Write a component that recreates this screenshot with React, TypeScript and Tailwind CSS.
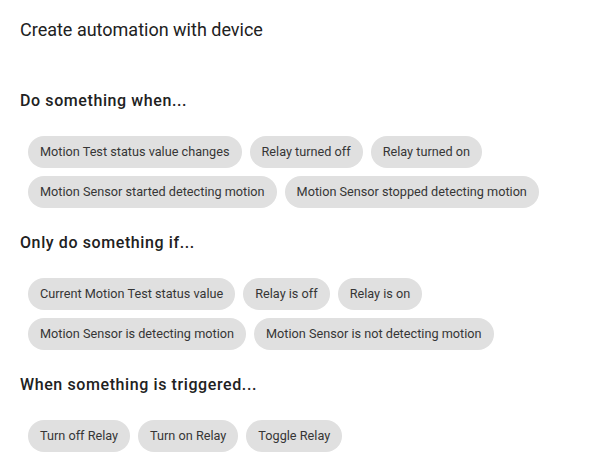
import React from 'react';

const sections = [
  {
    title: 'Do something when...',
    items: [
      'Motion Test status value changes',
      'Relay turned off',
      'Relay turned on',
      'Motion Sensor started detecting motion',
      'Motion Sensor stopped detecting motion',
    ],
  },
  {
    title: 'Only do something if...',
    items: [
      'Current Motion Test status value',
      'Relay is off',
      'Relay is on',
      'Motion Sensor is detecting motion',
      'Motion Sensor is not detecting motion',
    ],
  },
  {
    title: 'When something is triggered...',
    items: ['Turn off Relay', 'Turn on Relay', 'Toggle Relay'],
  },
];

function Chip({ label }: { label: string }) {
  return (
    <button className="h-8 px-3 rounded-full bg-[#e0e0e0] text-[12.7px] text-[#363636] leading-8 whitespace-nowrap">
      {label}
    </button>
  );
}

export default function App() {
  return (
    <div className="w-[591px] h-[469px] bg-white px-5 font-['Roboto',sans-serif] overflow-hidden">
      <h2 className="pt-[18px] text-[18px] leading-6 text-[#212121]">Create automation with device</h2>

      {sections.map((s, i) => (
        <div key={s.title} className={i === 0 ? 'mt-[47px]' : 'mt-[23px]'}>
          <h3 className="text-[16px] leading-6 font-medium tracking-[0.6px] text-[#212121]">{s.title}</h3>
          <div className="mt-[23px] pl-2 flex flex-wrap gap-2">
            {s.items.map((item) => (
              <Chip key={item} label={item} />
            ))}
          </div>
        </div>
      ))}
    </div>
  );
}
